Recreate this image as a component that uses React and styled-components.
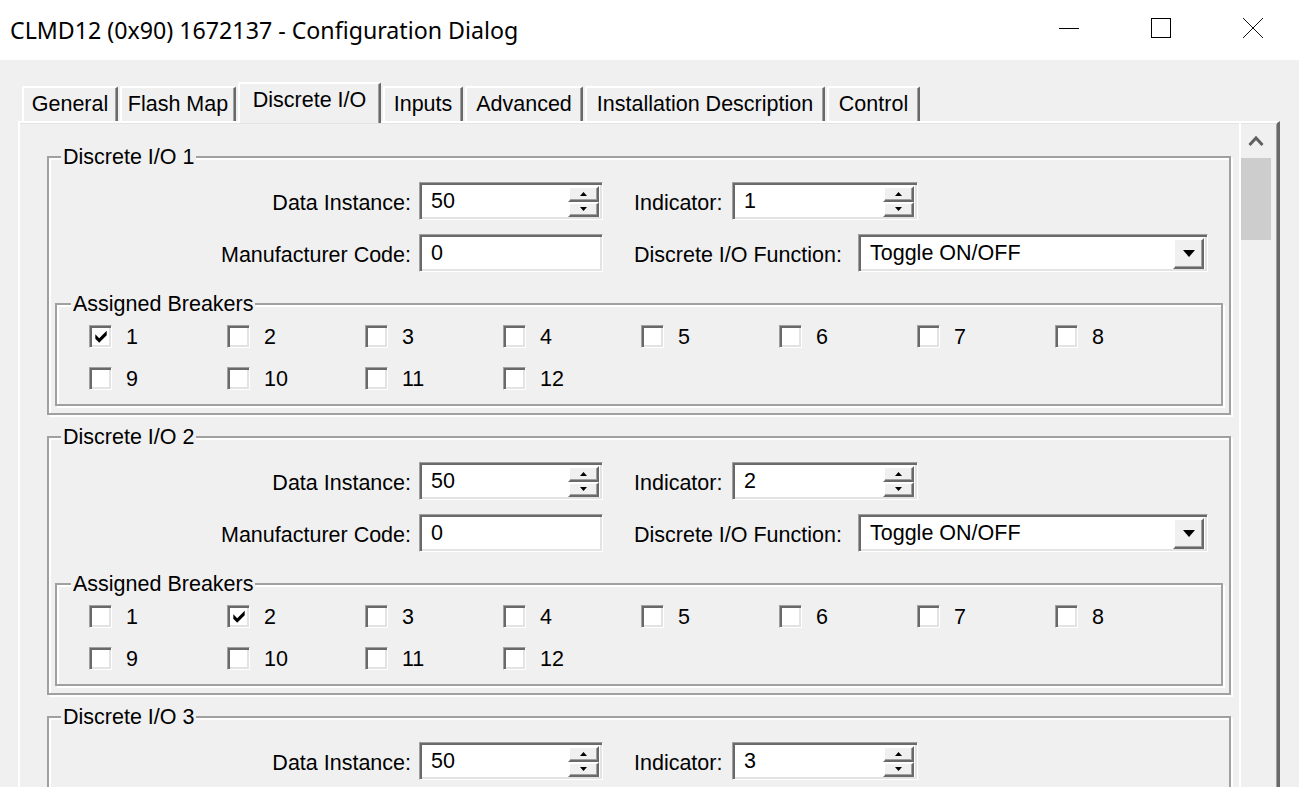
import React from "react";
import styled, { createGlobalStyle } from "styled-components";

const GlobalStyle = createGlobalStyle`
  html, body {
    margin: 0;
    padding: 0;
    overflow: hidden;
    background: #f0f0f0;
  }
`;

const TABS = [
  { label: "General", w: 96 },
  { label: "Flash Map", w: 116 },
  { label: "Discrete I/O", w: 143, active: true },
  { label: "Inputs", w: 80 },
  { label: "Advanced", w: 118 },
  { label: "Installation Description", w: 240 },
  { label: "Control", w: 93 },
];

const GROUPS = [1, 2, 3];
const BREAKERS = [1, 2, 3, 4, 5, 6, 7, 8, 9, 10, 11, 12];

export default function App() {
  return (
    <>
      <GlobalStyle />
      <Window>
        <TitleBar>
          <Title>CLMD12 (0x90) 1672137 - Configuration Dialog</Title>
          <CaptionButton>
            <svg width="20" height="20" viewBox="0 0 20 20">
              <line x1="0" y1="10.5" x2="20" y2="10.5" stroke="#000" strokeWidth="1" />
            </svg>
          </CaptionButton>
          <CaptionButton>
            <svg width="20" height="20" viewBox="0 0 20 20">
              <rect x="0.5" y="0.5" width="19" height="19" fill="none" stroke="#000" strokeWidth="1" />
            </svg>
          </CaptionButton>
          <CaptionButton>
            <svg width="20" height="20" viewBox="0 0 20 20">
              <path d="M0 0 L20 20 M20 0 L0 20" stroke="#111" strokeWidth="1.1" fill="none" />
            </svg>
          </CaptionButton>
        </TitleBar>

        <Body>
          <TabStrip>
            {TABS.map((t) => (
              <Tab key={t.label} $w={t.w} $active={t.active}>
                {t.label}
              </Tab>
            ))}
          </TabStrip>

          <Panel>
            <ScrollContent>
              {GROUPS.map((n) => (
                <Group key={n}>
                  <Legend>Discrete I/O {n}</Legend>

                  <FormRow>
                    <LeftLabel>Data Instance:</LeftLabel>
                    <Spin value="50" width={184} />
                    <RightPart>
                      <RightLabel $w={98}>Indicator:</RightLabel>
                      <Spin value={String(n)} width={186} />
                    </RightPart>
                  </FormRow>

                  <FormRow>
                    <LeftLabel>Manufacturer Code:</LeftLabel>
                    <Field $w={184}>
                      <FieldText>0</FieldText>
                    </Field>
                    <RightPart>
                      <RightLabel $w={224}>Discrete I/O Function:</RightLabel>
                      <Field $w={350}>
                        <FieldText>Toggle ON/OFF</FieldText>
                        <DropButton>
                          <svg width="12" height="7" viewBox="0 0 12 7">
                            <polygon points="0,0 12,0 6,7" fill="#000" />
                          </svg>
                        </DropButton>
                      </Field>
                    </RightPart>
                  </FormRow>

                  <SubGroup>
                    <SubLegend>Assigned Breakers</SubLegend>
                    <CheckGrid>
                      {BREAKERS.map((b) => (
                        <CheckItem key={b}>
                          <CheckBox>
                            {b === n && (
                              <svg width="12" height="13" viewBox="0 0 7 8">
                                <polygon
                                  points="0,2.6 2.4,5 7,0.4 7,3.2 2.4,7.8 0,5.4"
                                  fill="#000"
                                />
                              </svg>
                            )}
                          </CheckBox>
                          <CheckLabel>{b}</CheckLabel>
                        </CheckItem>
                      ))}
                    </CheckGrid>
                  </SubGroup>
                </Group>
              ))}
            </ScrollContent>

            <ScrollBar>
              <ScrollArrow>
                <svg width="16" height="11" viewBox="0 0 16 11">
                  <polyline
                    points="1.5,10 8,3 14.5,10"
                    fill="none"
                    stroke="#606060"
                    strokeWidth="3"
                  />
                </svg>
              </ScrollArrow>
              <Thumb />
            </ScrollBar>
          </Panel>
        </Body>
      </Window>
    </>
  );
}

function Spin({ value, width }) {
  return (
    <Field $w={width}>
      <FieldText>{value}</FieldText>
      <SpinButtons>
        <SpinButton>
          <svg width="7" height="4" viewBox="0 0 7 4">
            <polygon points="0,4 7,4 3.5,0" fill="#000" />
          </svg>
        </SpinButton>
        <SpinButton>
          <svg width="7" height="4" viewBox="0 0 7 4">
            <polygon points="0,0 7,0 3.5,4" fill="#000" />
          </svg>
        </SpinButton>
      </SpinButtons>
    </Field>
  );
}

const Window = styled.div`
  width: 1299px;
  height: 787px;
  display: flex;
  flex-direction: column;
  background: #f0f0f0;
  overflow: hidden;
  font-family: "Liberation Sans", Arial, sans-serif;
  font-size: 21.5px;
  color: #000;
`;

const TitleBar = styled.div`
  flex: none;
  height: 60px;
  display: flex;
  background: #fff;
`;

const Title = styled.div`
  flex: 1;
  padding-left: 10px;
  font-family: "Noto Sans", sans-serif;
  font-size: 23.2px;
  line-height: 60px;
  white-space: nowrap;
`;

const CaptionButton = styled.div`
  width: 92px;
  height: 60px;
  display: flex;
  justify-content: center;
  align-items: flex-start;
  padding-top: 18px;
  box-sizing: border-box;

  svg {
    display: block;
    shape-rendering: crispEdges;
  }
`;

const Body = styled.div`
  flex: 1;
  min-height: 0;
  display: flex;
  flex-direction: column;
  padding: 22px 19px 0 18px;
`;

const TabStrip = styled.div`
  flex: none;
  height: 39px;
  display: flex;
  align-items: flex-end;
  gap: 2px;
  padding-left: 4px;
  position: relative;
  z-index: 1;
`;

const Tab = styled.div`
  box-sizing: border-box;
  width: ${(p) => p.$w}px;
  height: ${(p) => (p.$active ? 41 : 35)}px;
  margin-bottom: ${(p) => (p.$active ? -2 : 0)}px;
  padding-bottom: ${(p) => (p.$active ? 7 : 1)}px;
  display: flex;
  align-items: center;
  justify-content: center;
  background: #f0f0f0;
  border-top: 2px solid #fff;
  border-left: 2px solid #fff;
  border-right: 2px solid #696969;
  border-radius: 2px 2px 0 0;
  box-shadow: inset -1px 0 0 #a0a0a0;
  white-space: nowrap;
`;

const Panel = styled.div`
  flex: 1;
  min-height: 0;
  display: flex;
  border-top: 2px solid #fff;
  border-left: 2px solid #fff;
  border-right: 3px solid #696969;
  box-shadow: inset 0 1px 0 #e3e3e3, inset -1px 0 0 #a0a0a0;
  padding-right: 6px;
`;

const ScrollContent = styled.div`
  flex: 1;
  min-width: 0;
  overflow: hidden;
  padding: 22px 8px 0 27px;
`;

const Group = styled.fieldset`
  margin: 0 0 10px;
  padding: 13px 6px 7px;
  min-width: 0;
  border: 2px solid #a0a0a0;
  box-shadow: inset 2px 2px 0 #fff, 2px 2px 0 #fff;
`;

const Legend = styled.legend`
  margin-left: 6px;
  padding: 0 2px;
  line-height: 24px;
  background: #f0f0f0;
`;

const FormRow = styled.div`
  display: flex;
  align-items: center;
  height: 38px;

  & + & {
    margin-top: 14px;
  }
`;

const LeftLabel = styled.label`
  flex: none;
  width: 356px;
  margin-right: 8px;
  padding-top: 4px;
  text-align: right;
  white-space: nowrap;
`;

const RightPart = styled.div`
  display: flex;
  align-items: center;
  margin-left: 31px;
`;

const RightLabel = styled.label`
  flex: none;
  width: ${(p) => p.$w}px;
  padding-top: 4px;
  white-space: nowrap;
`;

const Field = styled.div`
  box-sizing: border-box;
  flex: none;
  width: ${(p) => p.$w}px;
  height: 38px;
  display: flex;
  background: #fff;
  border: 1px solid;
  border-color: #a0a0a0 #fff #fff #a0a0a0;
  box-shadow: inset 2px 2px 0 #696969, inset -2px -2px 0 #e3e3e3;
  padding: 3px 3px 2px 2px;
`;

const FieldText = styled.span`
  flex: 1;
  padding-left: 9px;
  line-height: 31px;
  white-space: nowrap;
`;

const SpinButtons = styled.div`
  width: 31px;
  display: flex;
  flex-direction: column;
`;

const RaisedButton = styled.div`
  box-sizing: border-box;
  display: flex;
  align-items: center;
  justify-content: center;
  background: #f0f0f0;
  border: 2px solid;
  border-color: #fff #696969 #696969 #fff;
  box-shadow: inset -1px -1px 0 #a0a0a0;

  svg {
    display: block;
  }
`;

const SpinButton = styled(RaisedButton)`
  flex: 1;
`;

const DropButton = styled(RaisedButton)`
  width: 31px;
`;

const SubGroup = styled.fieldset`
  margin: 20px 0 0;
  padding: 9px 6px 14px;
  min-width: 0;
  border: 2px solid #a0a0a0;
  box-shadow: inset 2px 2px 0 #fff, 2px 2px 0 #fff;
`;

const SubLegend = styled(Legend)`
  margin-left: 8px;
`;

const CheckGrid = styled.div`
  display: grid;
  grid-template-columns: repeat(8, 138px);
  row-gap: 19px;
  padding-left: 26px;
`;

const CheckItem = styled.div`
  display: flex;
  align-items: center;
  gap: 14px;
  height: 23px;
`;

const CheckBox = styled.span`
  box-sizing: border-box;
  flex: none;
  width: 23px;
  height: 23px;
  display: flex;
  align-items: center;
  justify-content: center;
  background: #fff;
  border: 1px solid;
  border-color: #a0a0a0 #fff #fff #a0a0a0;
  box-shadow: inset 2px 2px 0 #696969, inset -2px -2px 0 #e3e3e3;

  svg {
    display: block;
  }
`;

const CheckLabel = styled.span`
  padding-top: 2px;
  line-height: 23px;
`;

const ScrollBar = styled.div`
  flex: none;
  width: 32px;
  box-sizing: border-box;
  border-left: 2px solid #fff;
  display: flex;
  flex-direction: column;
`;

const ScrollArrow = styled.div`
  height: 35px;
  display: flex;
  align-items: center;
  justify-content: center;
  padding-bottom: 1px;
  box-sizing: border-box;
`;

const Thumb = styled.div`
  height: 82px;
  background: #cdcdcd;
`;
